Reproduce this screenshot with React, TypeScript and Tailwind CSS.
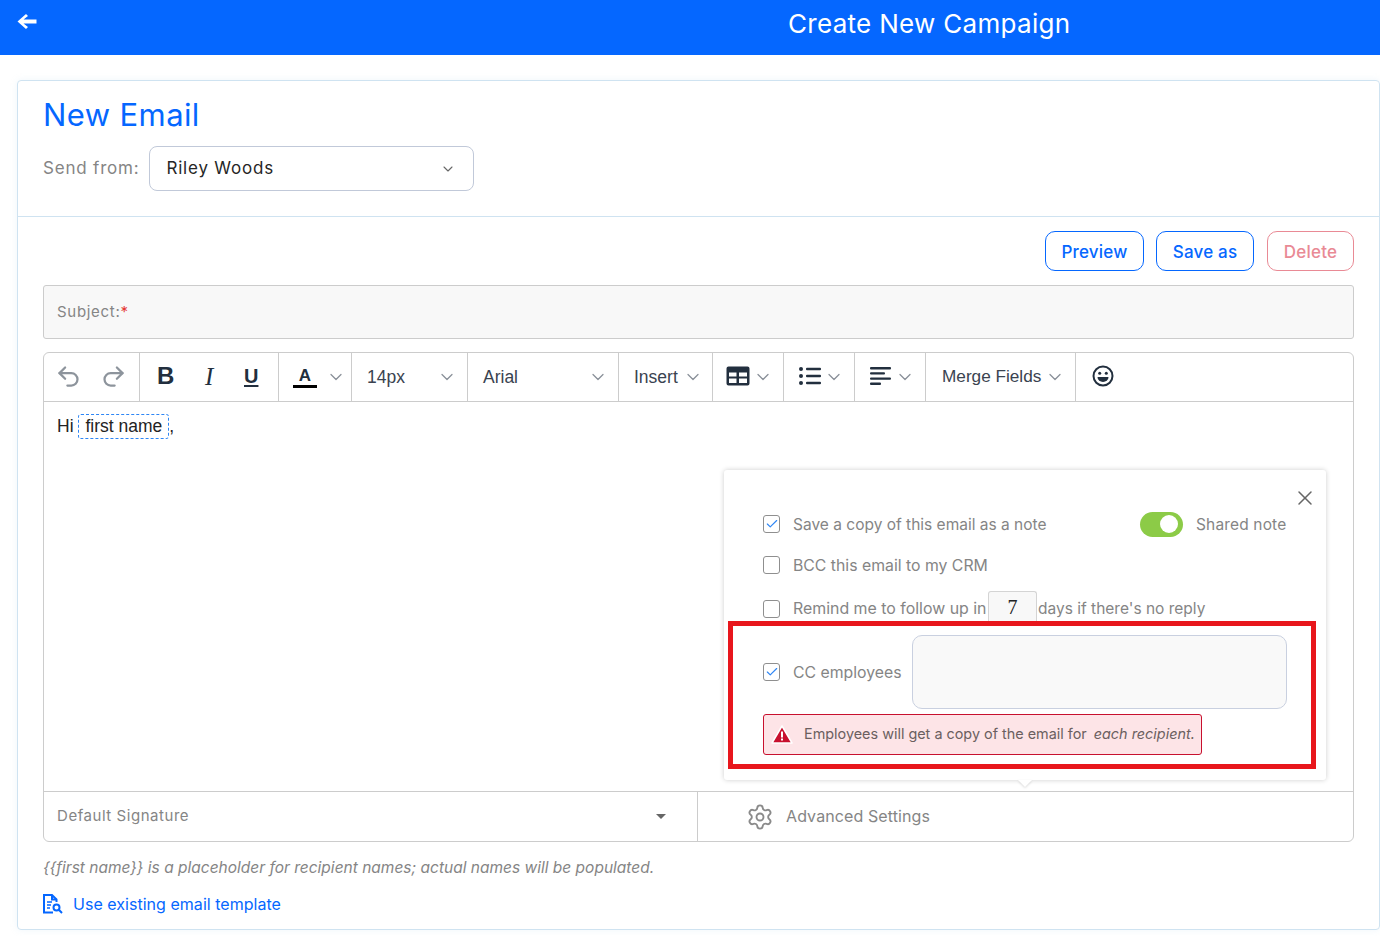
import { ChevronDown, Undo2, Redo2, X, Check, Settings } from 'lucide-react';

const sans = "font-['Inter','Noto_Sans',sans-serif]";

function Chev({ className = '' }: { className?: string }) {
	return <ChevronDown size={20} strokeWidth={1.5} className={`shrink-0 text-[#8a9099] ${className}`} />;
}

function Tool({ children, className = '' }: { children: React.ReactNode; className?: string }) {
	return <div className={`flex items-center h-full border-r border-[#cccccc] ${className}`}>{children}</div>;
}

function Box({ checked = false }: { checked?: boolean }) {
	return (
		<span className="flex items-center justify-center w-[17px] h-[18px] shrink-0 rounded-[3px] border border-[#8f8f8f] bg-white">
			{checked && <Check size={14} strokeWidth={2} className="text-[#2e86f5]" />}
		</span>
	);
}

export default function App() {
	return (
		<div className={`${sans} w-[1380px] h-[936px] overflow-hidden bg-white`}>
			<header className="flex items-start h-[55px] bg-[#0567ff] text-white">
				<svg width="20" height="15" viewBox="0 0 20 15" className="mt-[14px] ml-[17px]">
					<path d="M9 0 L11 2 L6.500 5.500 H19.500 V9.500 H6.500 L11 13 L9 15 L0.500 7.500 Z" fill="currentColor" />
				</svg>
				<h1 className="ml-[751px] mt-[7px] text-[26px] leading-[33px] tracking-[0.3px] whitespace-nowrap">Create New Campaign</h1>
			</header>

			<main className="ml-[17px] mt-[25px] w-[1363px] h-[850px] rounded-[4px] border border-[#cfe3f1] shadow-[0_0_6px_rgba(190,220,240,0.25)]">
				<section className="h-[136px] border-b border-[#cfe3f1] pl-[25px] pt-[14px]">
					<h2 className="text-[31px] leading-[40px] text-[#0567ff] tracking-[0.4px]">New Email</h2>
					<div className="flex items-center gap-[10px] mt-[11px] tracking-[0.8px]">
						<span className="text-[17px] text-[#858585]">Send from:</span>
						<div className="flex items-center justify-between w-[325px] h-[45px] rounded-[8px] border border-[#c1c9d9] pl-4 pr-[17px] text-[17px] text-[#262626]">
							Riley Woods
							<ChevronDown size={16} strokeWidth={1.6} className="text-[#666]" />
						</div>
					</div>
				</section>

				<section className="px-[25px]">
					<div className="flex justify-end mt-[14px] text-[17px] font-medium tracking-[0.2px]">
						<button className="w-[99px] h-10 pt-[3px] rounded-[10px] border border-[#0567ff] text-[#0567ff]">Preview</button>
						<button className="w-[98px] h-10 pt-[3px] ml-3 mr-[13px] rounded-[10px] border border-[#0567ff] text-[#0567ff]">Save as</button>
						<button className="w-[87px] h-10 pt-[3px] rounded-[10px] border border-[#e98a95] text-[#e98a95]">Delete</button>
					</div>

					<div className="flex items-center h-[54px] mt-[14px] pl-[13px] rounded-[3px] border border-[#cccccc] bg-[#f8f8f8] text-[15px] tracking-[0.7px] text-[#858585]">
						Subject:<span className="text-[#e53935]">*</span>
					</div>

					<div className="relative h-[490px] mt-[13px] rounded-[6px] border border-[#cccccc]">
						<div className="flex items-center h-[49px] border-b border-[#cccccc] font-['Liberation_Sans',sans-serif] text-[17.5px] text-[#3a4350]">
							<Tool className="w-[96px] pl-[11px] gap-[18px] text-[#8d949c]">
								<Undo2 size={27} strokeWidth={2} className="-mt-[2px]" />
								<Redo2 size={27} strokeWidth={2} className="-mt-[2px]" />
							</Tool>
							<Tool className="w-[139px] pl-[17px] text-[#222f3e]">
								<span className="w-[48px] -mt-[2px] text-[24px] font-bold leading-none">B</span>
								<span className="w-[39px] -mt-[2px] font-['Liberation_Serif',serif] text-[25px] italic leading-none">I</span>
								<span className="-mt-[2px] text-[20px] font-bold leading-[20px] underline underline-offset-2">U</span>
							</Tool>
							<Tool className="w-[73px] pl-[14px]">
								<span className="flex flex-col items-center w-[24px] mr-[9px] text-[#222f3e]">
									<span className="text-[17px] font-bold leading-[18px]">A</span>
									<span className="w-[24px] h-[3px] bg-black" />
								</span>
								<Chev />
							</Tool>
							<Tool className="w-[116px] pl-[15px] gap-[36px]">
								<span className="w-[34px]">14px</span>
								<Chev />
							</Tool>
							<Tool className="w-[151px] pl-[15px] justify-between pr-[10px]">
								Arial
								<Chev />
							</Tool>
							<Tool className="w-[94px] pl-[15px] gap-[5px]">
								Insert
								<Chev />
							</Tool>
							<Tool className="w-[71px] pl-[13px] gap-[3px]">
								<svg width="24" height="20" viewBox="0 0 24 20" className="-mt-[2px] text-[#222f3e]">
									<path fill="currentColor" fillRule="evenodd" d="M2.500 0.500h19a2 2 0 0 1 2 2v15a2 2 0 0 1-2 2h-19a2 2 0 0 1-2-2v-15a2 2 0 0 1 2-2zM3 6.500v4h7.500v-4zM13 6.500v4h8v-4zM3 12.500v4.500h7.500v-4.500zM13 12.500v4.500h8v-4.500z" />
								</svg>
								<Chev />
							</Tool>
							<Tool className="w-[71px] pl-[14px] gap-[2px]">
								<svg width="24" height="20" viewBox="0 0 24 20" className="-mt-[2px] text-[#222f3e]" fill="currentColor">
									<circle cx="3" cy="3" r="2" />
									<circle cx="3" cy="10" r="2" />
									<circle cx="3" cy="17" r="2" />
									<rect x="8" y="1.800" width="15" height="2.400" rx="1" />
									<rect x="8" y="8.800" width="15" height="2.400" rx="1" />
									<rect x="8" y="15.800" width="15" height="2.400" rx="1" />
								</svg>
								<Chev />
							</Tool>
							<Tool className="w-[71px] pl-[14px] gap-[2px]">
								<svg width="24" height="20" viewBox="0 0 24 20" className="-mt-[2px] text-[#222f3e]" fill="currentColor">
									<rect x="1" y="1" width="21" height="2.400" rx="1" />
									<rect x="1" y="6.200" width="15" height="2.400" rx="1" />
									<rect x="1" y="11.400" width="21" height="2.400" rx="1" />
									<rect x="1" y="16.600" width="11" height="2.400" rx="1" />
								</svg>
								<Chev />
							</Tool>
							<Tool className="w-[150px] pl-[16px] gap-[4px] text-[17.2px]">
								Merge Fields
								<Chev />
							</Tool>
							<div className="pl-[16px]">
								<svg width="22" height="22" viewBox="0 0 22 22" className="-mt-[2px] text-[#222f3e]">
									<circle cx="11" cy="11" r="9.500" fill="none" stroke="currentColor" strokeWidth="2" />
									<circle cx="7.700" cy="8.200" r="1.500" fill="currentColor" />
									<circle cx="14.300" cy="8.200" r="1.500" fill="currentColor" />
									<path d="M5.500 12 H16.500 A5.500 5 0 0 1 5.500 12 Z" fill="currentColor" />
								</svg>
							</div>
						</div>

						<div className="h-[389px] pl-[13px] pt-3 font-['Liberation_Sans',sans-serif] text-[17.5px] leading-[25px] text-[#222]">
							Hi <span className="inline-block h-[25px] px-[6px] rounded-[3px] border border-dashed border-[#2e86f5] leading-[22px]">first name</span>,
						</div>

						<div className="flex h-[50px] border-t border-[#cccccc] text-[15px] text-[#858585]">
							<div className="flex items-center justify-between w-[654px] pl-[13px] pr-[31px] border-r border-[#cccccc] tracking-[0.55px]">
								Default Signature
								<span className="w-0 h-0 border-x-[5px] border-x-transparent border-t-[5px] border-t-[#666]" />
							</div>
							<div className="flex items-center pl-[48px] gap-[12px] text-[16px] tracking-[0.1px]">
								<Settings size={28} strokeWidth={1.6} className="text-[#8a8a8a]" />
								<span className="-mt-[2px]">Advanced Settings</span>
							</div>
						</div>

						{/* popover over the editor */}
						<div className="absolute left-[680px] top-[117px] w-[602px] h-[310px] rounded-[3px] bg-white shadow-[0_0_5px_rgba(0,0,0,0.2)] text-[15.5px] text-[#858585] whitespace-nowrap">
							<X size={24} strokeWidth={1.5} className="absolute right-[9px] top-[16px] text-[#666]" />
							<div className="flex items-center h-[20px] mt-[44px] ml-[39px]">
								<Box checked />
								<span className="ml-[13px] w-[347px] pt-[2px]">Save a copy of this email as a note</span>
								<span className="flex items-center justify-end w-[43px] h-[25px] pr-[5px] rounded-full bg-[#8ccb47]">
									<span className="w-[18px] h-[18px] rounded-full bg-white" />
								</span>
								<span className="ml-[13px] pt-[2px] tracking-[0.15px]">Shared note</span>
							</div>
							<div className="flex items-center h-[20px] mt-[21px] ml-[39px]">
								<Box />
								<span className="ml-[13px] pt-[2px] text-[15.8px]">BCC this email to my CRM</span>
							</div>
							<div className="flex items-end h-[31px] mt-[16px] ml-[39px]">
								<span className="self-center mt-[4px]"><Box /></span>
								<span className="ml-[13px] mb-[1px] w-[195px] text-[15.9px]">Remind me to follow up in</span>
								<span className="flex items-center justify-center w-[49px] h-[31px] mr-[1px] rounded-t-[3px] border border-[#d4d4d4] border-b-0 bg-[#f8f8f8] font-['Liberation_Serif',serif] text-[20px] text-[#222]">7</span>
								<span className="mb-[2px]">days if there's no reply</span>
							</div>
							<div className="flex items-center mt-[13px] ml-[39px] gap-[13px]">
								<Box checked />
								<span className="w-[106px] pt-[2px] text-[15.8px]">CC employees</span>
								<div className="w-[375px] h-[74px] rounded-[10px] border border-[#c9d0e0] bg-[#f9f9f9]" />
							</div>
							<div className="flex items-center w-[439px] h-[41px] mt-[5px] ml-[39px] pl-[7px] rounded-[3px] border border-[#c8102e] bg-[#fde4e7] text-[14.4px] text-[#6b5f60]">
								<svg width="22" height="19" viewBox="0 0 22 19" className="shrink-0">
									<path d="M11 1 L21 18 H1 Z" fill="#c8102e" stroke="#fff" strokeWidth="1.500" strokeLinejoin="round" />
									<rect x="10" y="6.500" width="2" height="6" fill="#fff" />
									<rect x="10" y="13.500" width="2" height="2" fill="#fff" />
								</svg>
								<span className="ml-[11px] pb-[2px]">Employees will get a copy of the email for</span>
								<span className="ml-[7px] pb-[2px] italic">each recipient.</span>
							</div>
							<span className="absolute left-[294px] -bottom-[7px] w-0 h-0 border-x-[7px] border-x-transparent border-t-[7px] border-t-white drop-shadow-[0_1px_1px_rgba(0,0,0,0.15)]" />
						</div>

						{/* annotation box */}
						<div className="absolute left-[684px] top-[268px] w-[588px] h-[148px] border-[5px] border-[#e8161c]" />
					</div>

					<p className="mt-[16px] text-[15.5px] italic text-[#858585] leading-[20px]">{'{{first name}} is a placeholder for recipient names; actual names will be populated.'}</p>
					<div className="flex items-center gap-[10px] mt-[14px] text-[16px] tracking-[0.03px] text-[#0567ff]">
						<svg width="20" height="20" viewBox="0 0 20 20" fill="none" stroke="currentColor" strokeWidth="2">
							<path d="M10 18.500H1V1H9l4.500 4.500V8" />
							<path d="M9 1V5.500H13.500" />
							<path d="M4 8h5M4 11h4M4 14h3" strokeWidth="1.500" />
							<circle cx="13.500" cy="13.500" r="3" />
							<path d="M15.800 15.800L19 19" />
						</svg>
						Use existing email template
					</div>
				</section>
			</main>
		</div>
	);
}
